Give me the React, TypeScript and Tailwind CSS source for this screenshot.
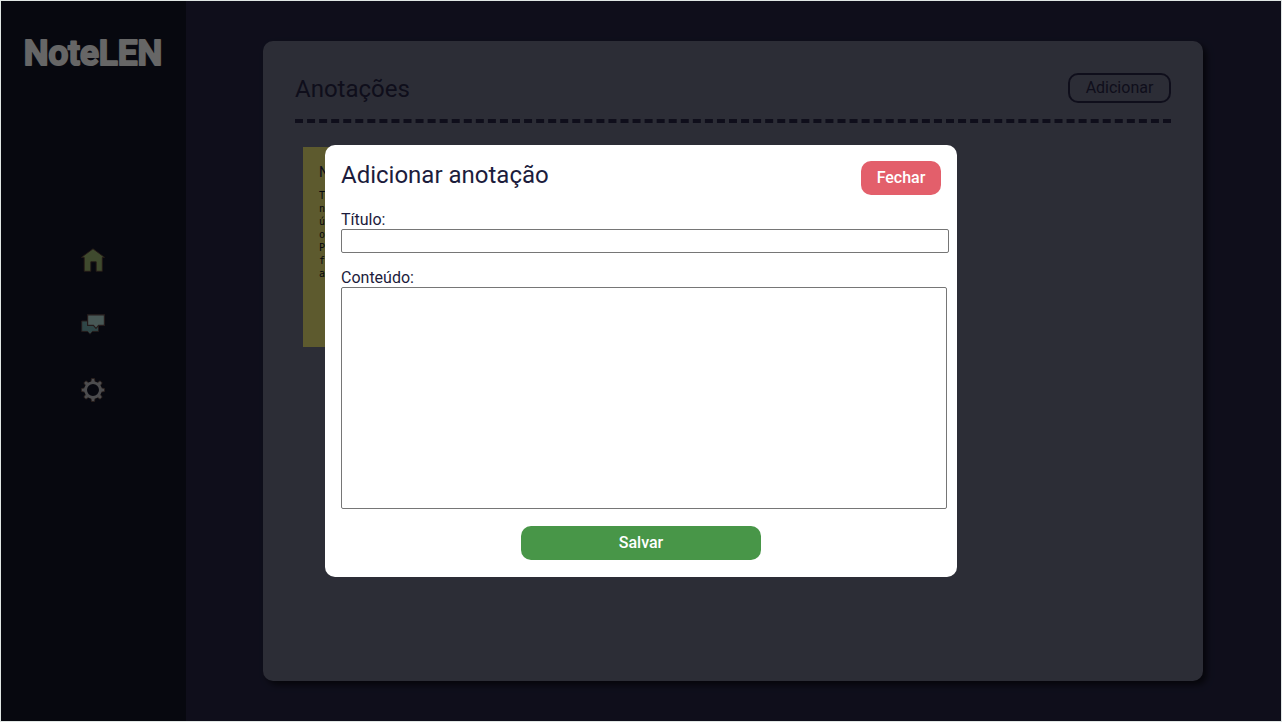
import React from "react";

function Logo() {
  return (
    <svg width="150" height="46" viewBox="0 0 150 46" role="img" aria-label="NoteLEN">
      <text
        x="75"
        y="36"
        textAnchor="middle"
        fill="#fff"
        stroke="#fff"
        strokeWidth="2"
        strokeLinejoin="round"
        strokeLinecap="round"
        className="font-['Roboto',sans-serif] text-[35px] font-semibold"
      >
        NoteLEN
      </text>
    </svg>
  );
}

function HomeIcon() {
  return (
    <svg width="24" height="24" viewBox="0 0 24 24" aria-hidden="true">
      <path
        d="M12 .8 23.6 9.4H21.3V23.3H15.2V13.8H9.8V23.3H3.2V9.4H.4Z"
        fill="#9fb873"
        stroke="#5a4038"
        strokeWidth=".9"
        strokeLinejoin="round"
      />
    </svg>
  );
}

function ChatIcon() {
  return (
    <svg width="24" height="24" viewBox="0 0 24 24" aria-hidden="true">
      <path
        d="M.7 8H17.5V18.4H11.5L9 21.2 6.5 18.4H.7Z"
        fill="#76b0b2"
        stroke="#5a4444"
        strokeWidth="1"
      />
      <path
        d="M6.6 1.8H23.4V12.4H17.6L15 15.4 12.4 12.4H6.6Z"
        fill="#b4dcd8"
        stroke="#5a4444"
        strokeWidth="1.2"
      />
    </svg>
  );
}

const teeth = [0, 45, 90, 135, 180, 225, 270, 315];

function GearIcon() {
  return (
    <svg width="24" height="24" viewBox="0 0 24 24" aria-hidden="true">
      <g fill="#bdbdc2" stroke="#6a4c3e" strokeWidth=".7">
        {teeth.map((angle) => (
          <path key={angle} d="M9.8 4.5 10.5.5H13.5L14.2 4.5Z" transform={`rotate(${angle} 12 12)`} />
        ))}
      </g>
      <circle cx="12" cy="12" r="7.4" fill="none" stroke="#bdbdc2" strokeWidth="2.8" />
    </svg>
  );
}

const noteLines = ["T", "n", "ú", "o", "P", "f", "a"];

export default function App() {
  return (
    <div className="relative flex min-h-screen border border-[#e0e6e4] bg-[#262545] font-['Roboto',sans-serif] text-base text-[#262545]">
      <aside className="flex w-[185px] shrink-0 flex-col items-center bg-[#131426] pt-7 pr-px">
        <h1>
          <Logo />
        </h1>
        <nav className="mt-[173px] flex flex-col gap-[41px]">
          <a href="#inicio" aria-label="Início"><HomeIcon /></a>
          <a href="#mensagens" aria-label="Mensagens"><ChatIcon /></a>
          <a href="#ajustes" aria-label="Configurações"><GearIcon /></a>
        </nav>
      </aside>

      <main className="flex min-w-0 flex-1 py-10 pr-[78px] pl-[77px]">
        <section className="flex-1 rounded-[10px] bg-[#6f7087] p-8 shadow-[4px_4px_6px_rgba(0,0,0,0.6)]">
          <header className="flex items-start justify-between border-b-4 border-dashed border-[#262545] pb-[14px]">
            <h2 className="text-2xl leading-8">Anotações</h2>
            <button type="button" className="h-[30px] w-[103px] rounded-[10px] border-2 border-[#262545] leading-[26px]">
              Adicionar
            </button>
          </header>
          <article className="mt-6 ml-2 h-[200px] w-[200px] bg-[#e8e173] p-4">
            <h3 className="text-sm leading-[18px]">N</h3>
            <div className="mt-2 font-['DejaVu_Sans_Mono',monospace] text-[10px] leading-[13px] text-[#111223]">
              {noteLines.map((line) => (
                <p key={line}>{line}</p>
              ))}
            </div>
          </article>
        </section>
      </main>

      <div className="absolute inset-0 flex items-center justify-center bg-black/60">
        <form
          role="dialog"
          aria-labelledby="dialog-title"
          className="w-[632px] rounded-[10px] bg-white px-4 pt-4 pb-[17px] text-[#1c1c3c]"
          onSubmit={(event) => event.preventDefault()}
        >
          <div className="flex items-start justify-between">
            <h2 id="dialog-title" className="text-2xl leading-7">Adicionar anotação</h2>
            <button type="button" className="h-[34px] w-20 rounded-[10px] bg-[#e35f6b] font-medium text-white">
              Fechar
            </button>
          </div>
          <label htmlFor="titulo" className="mt-4 block leading-[18px]">Título:</label>
          <input
            id="titulo"
            type="text"
            className="block h-6 w-[608px] rounded-[2px] border border-[#767676] bg-white px-1 outline-none"
          />
          <label htmlFor="conteudo" className="mt-4 block leading-[18px]">Conteúdo:</label>
          <textarea
            id="conteudo"
            className="block h-[222px] w-[606px] resize-none rounded-[2px] border border-[#767676] bg-white p-1 outline-none"
          />
          <button type="submit" className="mx-auto mt-[17px] block h-[34px] w-60 rounded-[10px] bg-[#489648] font-medium text-white">
            Salvar
          </button>
        </form>
      </div>
    </div>
  );
}
